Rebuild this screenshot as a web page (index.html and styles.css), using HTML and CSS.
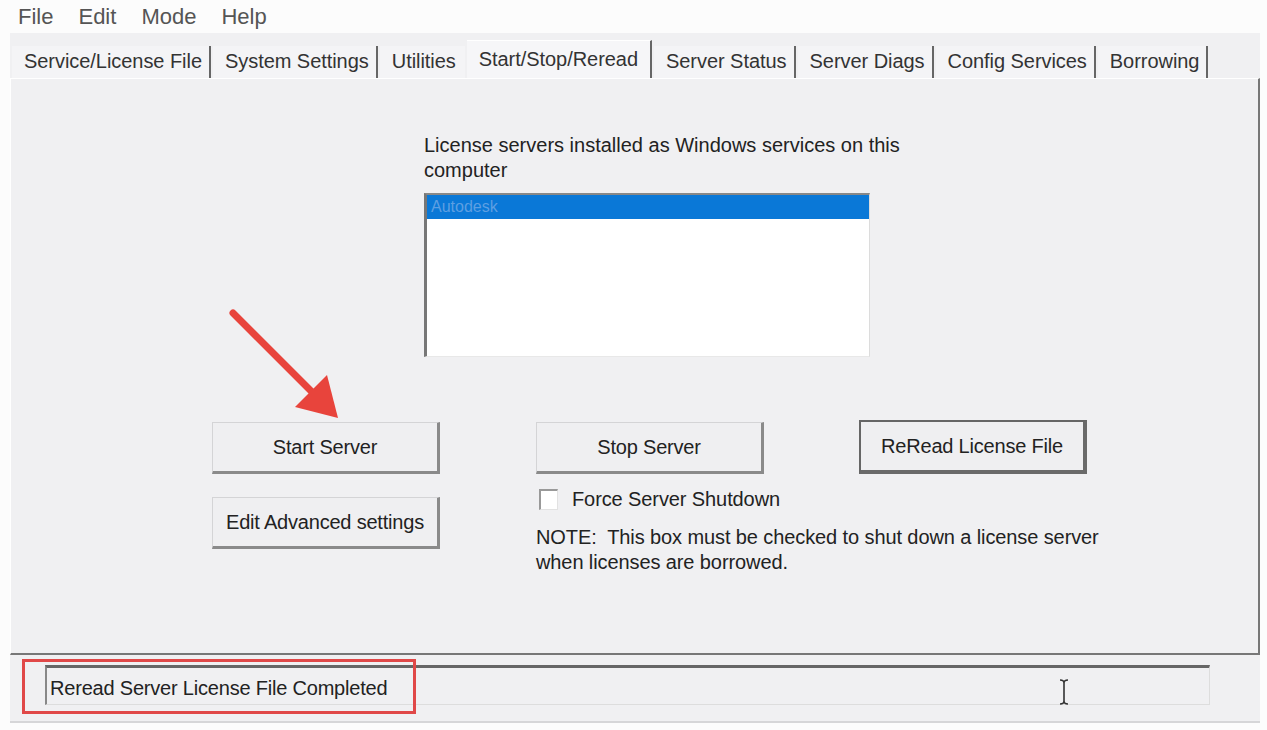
FILE: index.html
```html
<!DOCTYPE html>
<html lang="en">
<head>
    <meta charset="UTF-8">
    <title>LMTOOLS - Start/Stop/Reread</title>
    <link rel="stylesheet" href="styles.css">
</head>
<body>
    <div class="menubar">
        <span>File</span>
        <span>Edit</span>
        <span>Mode</span>
        <span>Help</span>
    </div>

    <div class="window">
        <!-- Tab strip -->
        <div class="tabs">
            <div class="tab">Service/License File</div>
            <div class="tab">System Settings</div>
            <div class="tab tab-noline">Utilities</div>
            <div class="tab active">Start/Stop/Reread</div>
            <div class="tab">Server Status</div>
            <div class="tab">Server Diags</div>
            <div class="tab">Config Services</div>
            <div class="tab">Borrowing</div>
        </div>

        <!-- Start/Stop/Reread page -->
        <div class="panel">
            <div class="services">
                <p class="services-label">License servers installed as Windows services on this computer</p>
                <div class="listbox">
                    <div class="list-item selected">Autodesk</div>
                </div>
            </div>

            <div class="actions">
                <div class="col">
                    <button class="btn">Start Server</button>
                    <button class="btn">Edit Advanced settings</button>
                </div>
                <div class="col">
                    <button class="btn">Stop Server</button>
                    <label class="check">
                        <span class="check-box"></span>
                        Force Server Shutdown
                    </label>
                    <p class="note">NOTE:&nbsp; This box must be checked to shut down a license server when licenses are borrowed.</p>
                </div>
                <div class="col">
                    <button class="btn btn-default">ReRead License File</button>
                </div>
            </div>

            <svg class="arrow" width="130" height="130" viewBox="0 0 130 130">
                <line x1="8" y1="8" x2="92" y2="92" stroke="#e8443c" stroke-width="7" stroke-linecap="round"/>
                <polygon points="113,113 70,102 102,70" fill="#e8443c"/>
            </svg>
        </div>

        <!-- Status line -->
        <div class="statusbar">
            <div class="status-field">Reread Server License File Completed</div>
            <div class="highlight"></div>
            <svg class="ibeam" width="10" height="26" viewBox="0 0 10 26">
                <path d="M1 1 Q5 1 5 4 Q5 1 9 1 M5 4 V22 M1 25 Q5 25 5 22 Q5 25 9 25" stroke="#333" stroke-width="1.6" fill="none"/>
            </svg>
        </div>
    </div>
</body>
</html>
```

FILE: styles.css
```css
* {
    margin: 0;
    padding: 0;
    box-sizing: border-box;
}

body {
    font-family: 'Liberation Sans', Arial, sans-serif;
    background: #fcfcfc;
    width: 1267px;
    height: 730px;
    overflow: hidden;
    color: #222;
}

.menubar {
    height: 33px;
    display: flex;
    align-items: center;
    gap: 25px;
    padding-left: 18px;
    font-size: 22px;
    color: #555;
}

.window {
    margin-left: 10px;
    width: 1250px;
    background: #f0f0f2;
    border-bottom: 2px solid #d6d6d8;
    padding-bottom: 14px;
}

.tabs {
    height: 45px;
    display: flex;
    align-items: flex-end;
    padding-left: 2px;
}

.tab {
    height: 32px;
    padding: 0 7px 0 12px;
    font-size: 20px;
    letter-spacing: -0.05px;
    line-height: 30px;
    color: #333;
    background: #f4f4f6;
    border-right: 2px solid #666;
    margin-right: 2px;
}

.tab-noline {
    border-right-color: #f4f4f6;
}

.tab.active {
    height: 38px;
    line-height: 36px;
    background: #f6f6f8;
    border-top: 1px solid #fff;
    padding-left: 12px;
    padding-right: 12px;
}

.panel {
    position: relative;
    height: 577px;
    border-top: 1px solid #fff;
    border-left: 1px solid #fff;
    border-right: 2px solid #777;
    border-bottom: 2px solid #777;
    padding-top: 54px;
}

.services {
    margin-left: 413px;
    width: 490px;
}

.services-label {
    font-size: 20px;
    line-height: 25px;
    color: #222;
}

.listbox {
    margin-top: 10px;
    width: 446px;
    height: 164px;
    background: #fff;
    border-top: 2px solid #888;
    border-left: 3px solid #777;
    border-right: 1px solid #dcdcdc;
    border-bottom: 1px solid #e8e8e8;
}

.list-item {
    height: 24px;
    padding-left: 4px;
    font-size: 16px;
    line-height: 24px;
}

.list-item.selected {
    background: #0a78d7;
    color: #5d9fe2;
}

.actions {
    display: grid;
    grid-template-columns: 228px 228px 228px;
    column-gap: 96px;
    margin-left: 201px;
    margin-top: 65px;
}

.col {
    display: flex;
    flex-direction: column;
    align-items: flex-start;
}

.btn {
    width: 228px;
    height: 52px;
    font-family: 'Liberation Sans', Arial, sans-serif;
    font-size: 20px;
    letter-spacing: -0.2px;
    color: #222;
    background: #efeff1;
    border-top: 1px solid #d4d4d6;
    border-left: 1px solid #d4d4d6;
    border-right: 3px solid #8a8a8a;
    border-bottom: 3px solid #8a8a8a;
    margin-bottom: 23px;
}

.btn-default {
    height: 54px;
    margin-top: -2px;
    margin-left: -1px;
    border-top: 2px solid #666;
    border-left: 2px solid #666;
    border-right: 4px solid #6a6a6a;
    border-bottom: 4px solid #6a6a6a;
}

.check {
    display: flex;
    align-items: center;
    gap: 14px;
    margin-top: -9px;
    margin-left: 3px;
    white-space: nowrap;
    font-size: 20px;
    letter-spacing: -0.1px;
    color: #222;
}

.check-box {
    width: 19px;
    height: 21px;
    background: #fff;
    border-top: 2px solid #999;
    border-left: 2px solid #999;
    border-right: 1px solid #e2e2e2;
    border-bottom: 1px solid #e2e2e2;
}

.note {
    margin-top: 14px;
    width: 585px;
    font-size: 20px;
    letter-spacing: -0.1px;
    line-height: 25px;
    color: #222;
}

.arrow {
    position: absolute;
    left: 214px;
    top: 226px;
}

.statusbar {
    position: relative;
    height: 52px;
    padding: 10px 50px 0 35px;
}

.status-field {
    height: 40px;
    padding-left: 3px;
    font-size: 20px;
    letter-spacing: -0.2px;
    line-height: 40px;
    color: #222;
    border-top: 3px solid #666;
    border-left: 2px solid #888;
    border-right: 1px solid #ddd;
    border-bottom: 1px solid #ddd;
}

.highlight {
    position: absolute;
    left: 12px;
    top: 4px;
    width: 394px;
    height: 55px;
    border: 3px solid #e04848;
}

.ibeam {
    position: absolute;
    left: 1049px;
    top: 24px;
}
```
